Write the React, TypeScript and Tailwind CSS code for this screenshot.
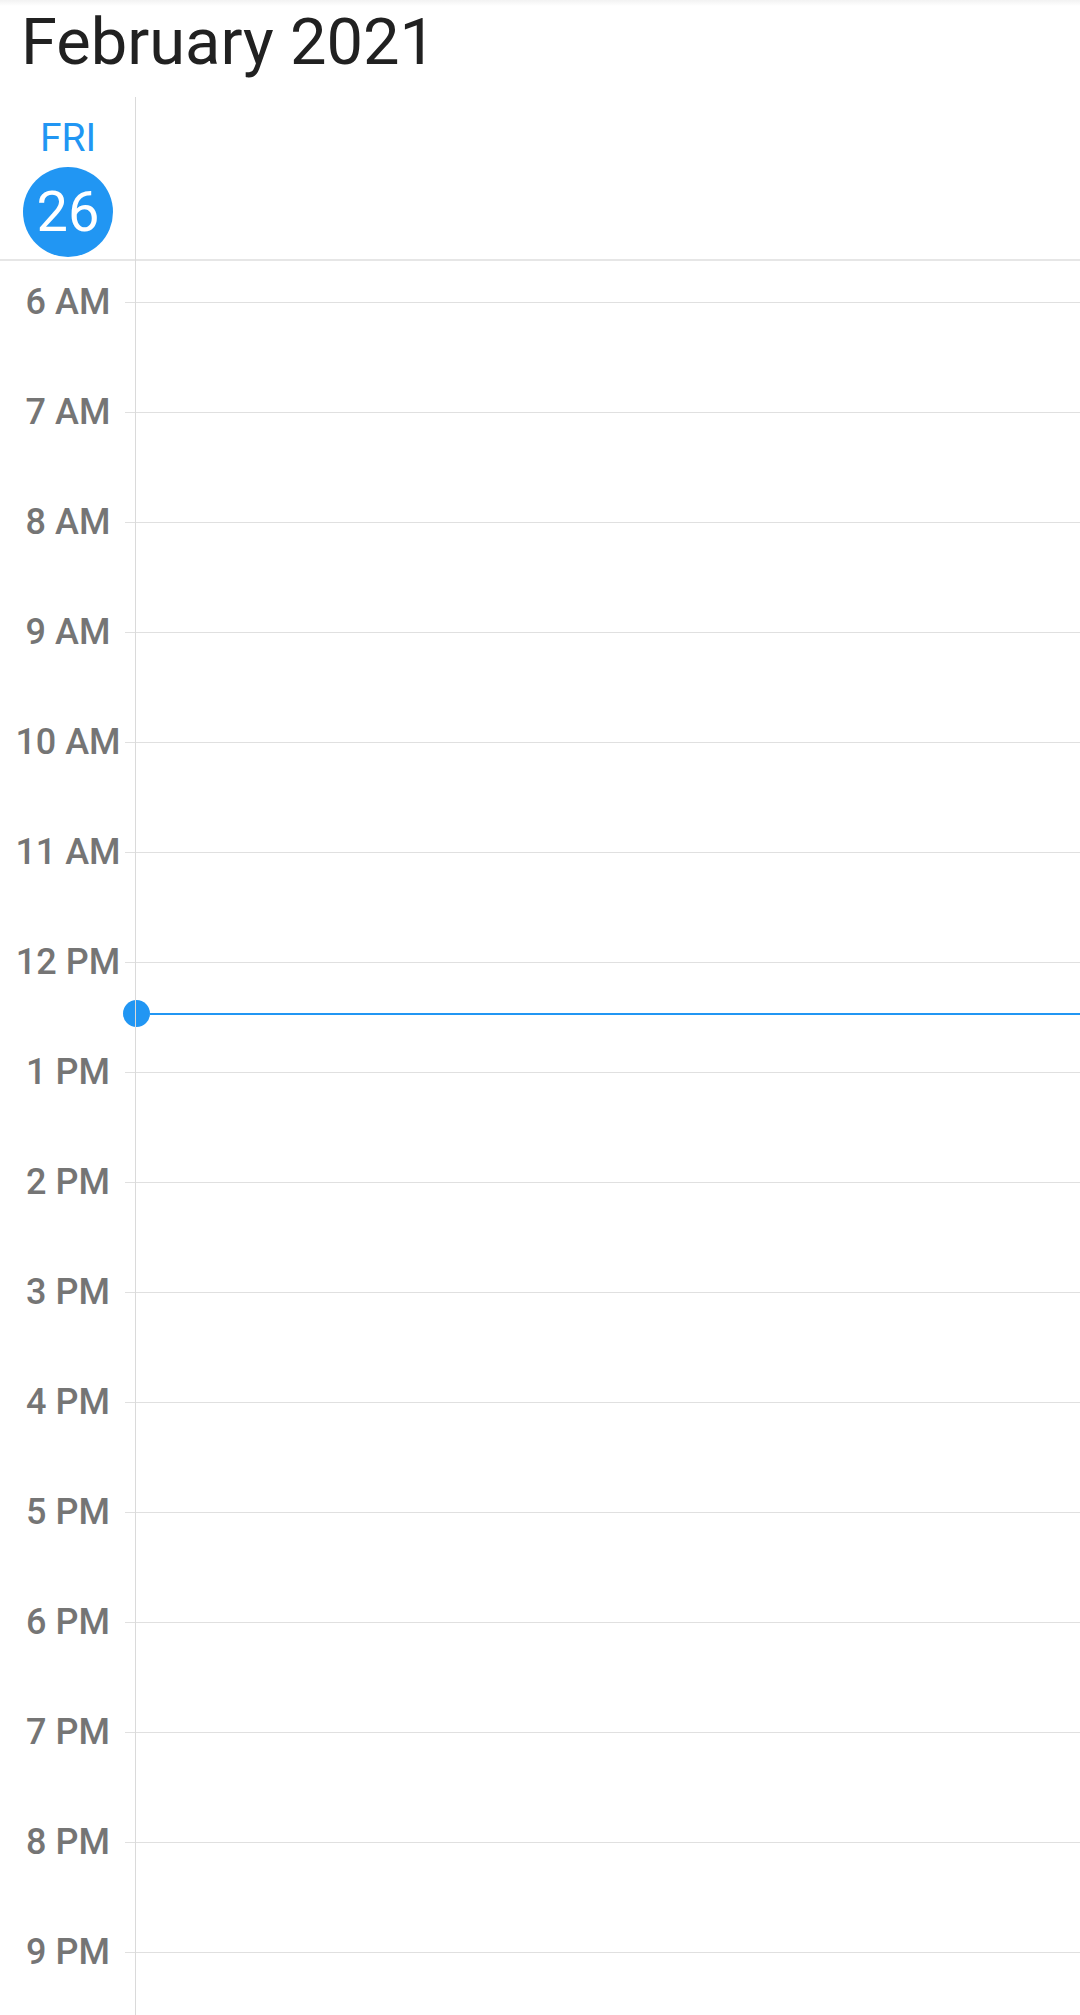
import React from 'react';

const hours = [
  '6 AM', '7 AM', '8 AM', '9 AM', '10 AM', '11 AM', '12 PM', '1 PM',
  '2 PM', '3 PM', '4 PM', '5 PM', '6 PM', '7 PM', '8 PM', '9 PM',
];

export default function App() {
  return (
    <div className="relative w-[1080px] h-[2015px] overflow-hidden bg-white font-[Roboto,sans-serif]">
      {/* top shadow strip */}
      <div className="absolute top-0 left-0 right-0 h-[6px] bg-gradient-to-b from-[#f2f2f2] to-white" />

      {/* Month title */}
      <div className="relative h-[97px] pl-[21px] pt-[4px] text-[65px] leading-[76px] text-[#212121]">
        February 2021
      </div>

      {/* Day header */}
      <div className="flex h-[162px]">
        <div className="w-[136px] flex flex-col items-center">
          <div className="mt-[19px] text-[39px] leading-[45px] text-[#2196f3]">FRI</div>
          <div className="mt-[6px] w-[90px] h-[90px] rounded-full bg-[#2196f3] flex items-center justify-center text-white text-[56px] leading-none">
            26
          </div>
        </div>
      </div>
      <div className="h-[2px] bg-[#e6e6e6]" />

      {/* Time grid */}
      <div className="relative -mt-[14px]">
        {hours.map((h) => (
          <div key={h} className="flex items-center h-[110px]">
            <div className="w-[136px] -mr-[11px] text-center text-[36px] leading-none font-medium text-[#757575]">
              {h}
            </div>
            <div className="flex-1 h-px bg-[#e0e0e0]" />
          </div>
        ))}

        {/* Current time indicator */}
        <div className="absolute left-[123px] right-0 top-[753px] h-[27px] flex items-center">
          <div className="w-[27px] h-[27px] rounded-full bg-[#2196f3] shrink-0" />
          <div className="flex-1 h-[2px] bg-[#2196f3]" />
        </div>
      </div>

      {/* Vertical divider between time ruler and day column */}
      <div className="absolute left-[135px] top-[97px] bottom-0 w-px bg-[#dadada]" />
    </div>
  );
}
